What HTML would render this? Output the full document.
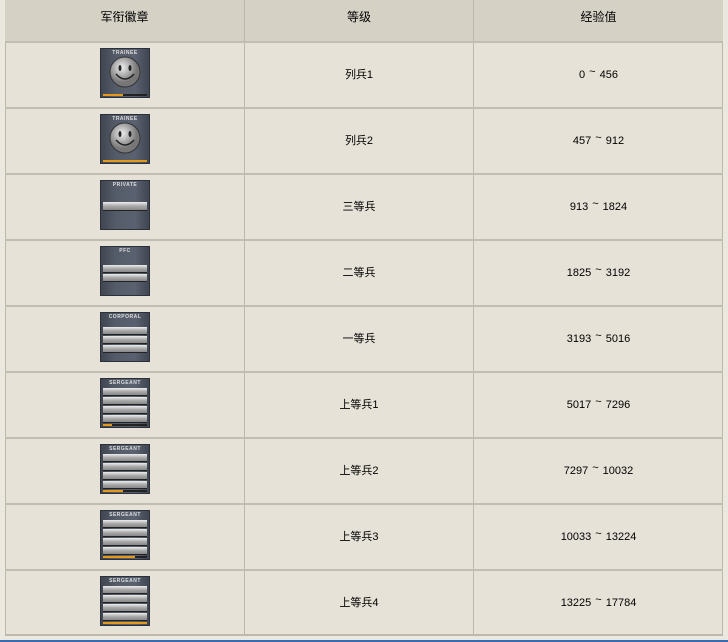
<!DOCTYPE html>
<html><head><meta charset="utf-8"><style>
body{margin:0;width:728px;height:642px;background:#ebe8df;position:relative;overflow:hidden;font-family:"Liberation Sans","Noto Sans CJK SC",sans-serif;font-size:11px;color:#000}
.t{position:absolute;left:5px;top:0;width:718px;height:636px;background:#e6e2d7;border-left:1px solid #bdb8ab;border-right:1px solid #bdb8ab;border-bottom:2px solid #bdb8ab;box-sizing:border-box}
.hd{position:absolute;left:5px;top:0;width:718px;height:41px;background:#d5d1c5}
.hl{position:absolute;left:5px;width:718px;height:2px;background:#c2bdb1}
.vl{position:absolute;top:0;width:1px;height:636px;background:#bdb8ab}
.c{position:absolute;text-align:center;line-height:16px}
.c s{text-decoration:none;position:relative;top:-3px;margin:0 4px}
.b{position:absolute;left:100px;width:50px;height:50px;background:linear-gradient(90deg,#3e4450,#545b68 30%,#5a6170 70%,#3e4450);box-shadow:inset 0 0 0 1px #2c3038}
.lb{position:absolute;left:0;top:2px;width:50px;text-align:center;font:bold 5px "Liberation Sans",sans-serif;color:#ddd;letter-spacing:.5px}
.bar{position:absolute;left:3px;width:44px;height:7px;background:linear-gradient(180deg,#eee,#aaa 50%,#888);box-shadow:0 1px 0 #222}
.pr{position:absolute;left:3px;bottom:2px;width:44px;height:2px;background:#222}
.pr i{display:block;height:2px;background:#e39a1a}
.blue{position:absolute;left:0;top:640px;width:728px;height:2px;background:#3a6ab0}
</style></head><body>
<div class="t"></div><div class="hd"></div>
<div class="vl" style="left:244px"></div><div class="vl" style="left:473px;top:0"></div>
<div class="hl" style="top:41px"></div>
<div class="hl" style="top:107px"></div><div class="hl" style="top:173px"></div><div class="hl" style="top:239px"></div><div class="hl" style="top:305px"></div><div class="hl" style="top:371px"></div><div class="hl" style="top:437px"></div><div class="hl" style="top:503px"></div><div class="hl" style="top:569px"></div>
<div class="c" style="left:5px;width:239px;top:9px;font-size:12px">军衔徽章</div>
<div class="c" style="left:245px;width:228px;top:9px;font-size:12px">等级</div>
<div class="c" style="left:474px;width:249px;top:9px;font-size:12px">经验值</div>

<div class="b" style="top:48px"><div class="lb">TRAINEE</div><svg width="50" height="50" style="position:absolute;left:0;top:0"><defs><radialGradient id="g" cx="40%" cy="35%"><stop offset="0" stop-color="#eee"/><stop offset="1" stop-color="#777"/></radialGradient></defs><circle cx="25" cy="24" r="15" fill="url(#g)" stroke="#333"/><ellipse cx="20" cy="20" rx="1.5" ry="3" fill="#222"/><ellipse cx="30" cy="20" rx="1.5" ry="3" fill="#222"/><path d="M16 26 Q25 36 34 26" stroke="#222" stroke-width="1.5" fill="none"/></svg><div class="pr"><i style="width:20px"></i></div></div>
<div class="c" style="left:245px;width:228px;top:67px">列兵1</div><div class="c" style="left:474px;width:249px;top:67px">0<s>~</s>456</div>

<div class="b" style="top:114px"><div class="lb">TRAINEE</div><svg width="50" height="50" style="position:absolute;left:0;top:0"><circle cx="25" cy="24" r="15" fill="url(#g)" stroke="#333"/><ellipse cx="20" cy="20" rx="1.5" ry="3" fill="#222"/><ellipse cx="30" cy="20" rx="1.5" ry="3" fill="#222"/><path d="M16 26 Q25 36 34 26" stroke="#222" stroke-width="1.5" fill="none"/></svg><div class="pr"><i style="width:44px"></i></div></div>
<div class="c" style="left:245px;width:228px;top:133px">列兵2</div><div class="c" style="left:474px;width:249px;top:133px">457<s>~</s>912</div>

<div class="b" style="top:180px"><div class="lb">PRIVATE</div><div class="bar" style="top:22px;height:8px"></div></div>
<div class="c" style="left:245px;width:228px;top:199px">三等兵</div><div class="c" style="left:474px;width:249px;top:199px">913<s>~</s>1824</div>

<div class="b" style="top:246px"><div class="lb">PFC</div><div class="bar" style="top:19px"></div><div class="bar" style="top:28px"></div></div>
<div class="c" style="left:245px;width:228px;top:265px">二等兵</div><div class="c" style="left:474px;width:249px;top:265px">1825<s>~</s>3192</div>

<div class="b" style="top:312px"><div class="lb">CORPORAL</div><div class="bar" style="top:15px"></div><div class="bar" style="top:24px"></div><div class="bar" style="top:33px"></div></div>
<div class="c" style="left:245px;width:228px;top:331px">一等兵</div><div class="c" style="left:474px;width:249px;top:331px">3193<s>~</s>5016</div>

<div class="b" style="top:378px"><div class="lb">SERGEANT</div><div class="bar" style="top:10px"></div><div class="bar" style="top:19px"></div><div class="bar" style="top:28px"></div><div class="bar" style="top:37px"></div><div class="pr"><i style="width:9px"></i></div></div>
<div class="c" style="left:245px;width:228px;top:397px">上等兵1</div><div class="c" style="left:474px;width:249px;top:397px">5017<s>~</s>7296</div>

<div class="b" style="top:444px"><div class="lb">SERGEANT</div><div class="bar" style="top:10px"></div><div class="bar" style="top:19px"></div><div class="bar" style="top:28px"></div><div class="bar" style="top:37px"></div><div class="pr"><i style="width:20px"></i></div></div>
<div class="c" style="left:245px;width:228px;top:463px">上等兵2</div><div class="c" style="left:474px;width:249px;top:463px">7297<s>~</s>10032</div>

<div class="b" style="top:510px"><div class="lb">SERGEANT</div><div class="bar" style="top:10px"></div><div class="bar" style="top:19px"></div><div class="bar" style="top:28px"></div><div class="bar" style="top:37px"></div><div class="pr"><i style="width:32px"></i></div></div>
<div class="c" style="left:245px;width:228px;top:529px">上等兵3</div><div class="c" style="left:474px;width:249px;top:529px">10033<s>~</s>13224</div>

<div class="b" style="top:576px"><div class="lb">SERGEANT</div><div class="bar" style="top:10px"></div><div class="bar" style="top:19px"></div><div class="bar" style="top:28px"></div><div class="bar" style="top:37px"></div><div class="pr"><i style="width:44px"></i></div></div>
<div class="c" style="left:245px;width:228px;top:595px">上等兵4</div><div class="c" style="left:474px;width:249px;top:595px">13225<s>~</s>17784</div>

<div class="blue"></div>
</body></html>
